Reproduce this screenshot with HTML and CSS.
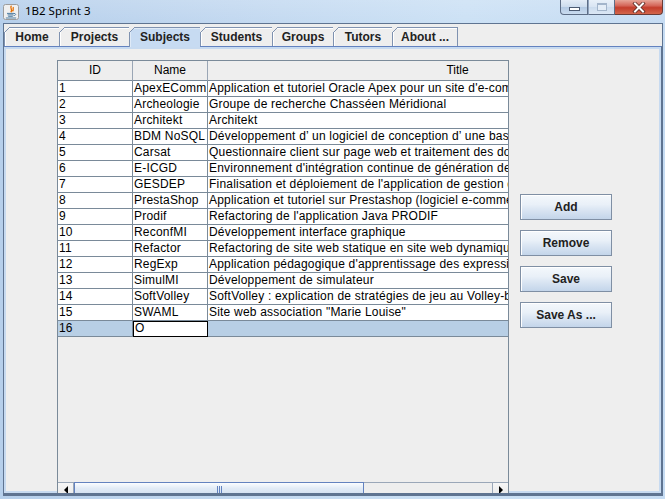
FILE: index.html
```html
<!DOCTYPE html>
<html>
<head>
<meta charset="utf-8">
<title>1B2 Sprint 3</title>
<link rel="stylesheet" href="styles.css">
</head>
<body>
<div class="window">
  <div class="titlebar">
    <svg class="app-icon" viewBox="0 0 16 16">
      <rect x="0.5" y="0.5" width="15" height="15" rx="2" fill="#f0f0f0" stroke="#9c9c9c"/>
      <path d="M8.5 1.8 C6 4 10.5 5.2 7.8 8.2 M10.6 3.2 C9.2 4.6 11.3 5.3 9.6 7.4" stroke="#e76f00" fill="none" stroke-width="1.3"/>
      <path d="M4 9.4 h7 M4.6 10.9 h5.8 M5.2 12.3 h4.6 M11 9.4 c2.2 0 2.2 2.2 -0.4 2.2" stroke="#4f7ea3" fill="none" stroke-width="1"/>
      <path d="M2.8 14 h10.4" stroke="#4f7ea3" stroke-width="1"/>
    </svg>
    <span class="title">1B2 Sprint 3</span>
    <div class="caption">
      <div class="cap cap-min"><span class="min-glyph"></span></div>
      <div class="cap cap-max"><span class="max-glyph"></span></div>
      <div class="cap cap-close">
        <svg class="close-glyph" viewBox="0 0 14 11">
          <path d="M3 1.5 L11 9.5 M11 1.5 L3 9.5" stroke="#5a2a24" stroke-width="3.6" stroke-linecap="square"/>
          <path d="M3 1.5 L11 9.5 M11 1.5 L3 9.5" stroke="#ffffff" stroke-width="2" stroke-linecap="square"/>
        </svg>
      </div>
    </div>
  </div>
  <div class="client">
    <div class="tabstrip">
      <div class="tab tab-home">Home</div>
      <div class="tab tab-projects">Projects</div>
      <div class="tab tab-subjects selected">Subjects</div>
      <div class="tab tab-students">Students</div>
      <div class="tab tab-groups">Groups</div>
      <div class="tab tab-tutors">Tutors</div>
      <div class="tab tab-about last">About ...</div>
    </div>
    <div class="tabcontent">
      <div class="scrollpane">
        <div class="viewport">
          <div class="grid">
            <div class="hcell">ID</div><div class="hcell">Name</div><div class="hcell">Title</div>
            <div class="cell">1</div><div class="cell">ApexEComm</div><div class="cell">Application et tutoriel Oracle Apex pour un site d'e-commerce</div>
            <div class="cell">2</div><div class="cell">Archeologie</div><div class="cell">Groupe de recherche Chasséen Méridional</div>
            <div class="cell">3</div><div class="cell">Architekt</div><div class="cell">Architekt</div>
            <div class="cell">4</div><div class="cell">BDM NoSQL</div><div class="cell">Développement d’ un logiciel de conception d’ une base de données NoSQL</div>
            <div class="cell">5</div><div class="cell">Carsat</div><div class="cell">Questionnaire client sur page web et traitement des données</div>
            <div class="cell">6</div><div class="cell">E-ICGD</div><div class="cell">Environnement d'intégration continue de génération de documents</div>
            <div class="cell">7</div><div class="cell">GESDEP</div><div class="cell">Finalisation et déploiement de l'application de gestion des dépenses</div>
            <div class="cell">8</div><div class="cell">PrestaShop</div><div class="cell">Application et tutoriel sur Prestashop (logiciel e-commerce)</div>
            <div class="cell">9</div><div class="cell">Prodif</div><div class="cell">Refactoring de l'application Java PRODIF</div>
            <div class="cell">10</div><div class="cell">ReconfMI</div><div class="cell">Développement interface graphique</div>
            <div class="cell">11</div><div class="cell">Refactor</div><div class="cell">Refactoring de site web statique en site web dynamique</div>
            <div class="cell">12</div><div class="cell">RegExp</div><div class="cell">Application pédagogique d'apprentissage des expressions régulières</div>
            <div class="cell">13</div><div class="cell">SimulMI</div><div class="cell">Développement de simulateur</div>
            <div class="cell">14</div><div class="cell">SoftVolley</div><div class="cell">SoftVolley : explication de stratégies de jeu au Volley-ball</div>
            <div class="cell">15</div><div class="cell">SWAML</div><div class="cell">Site web association "Marie Louise"</div>
            <div class="cell sel">16</div><div class="cell editing">O</div><div class="cell sel"></div>
          </div>
        </div>
        <div class="hscroll">
          <div class="arrow arrow-left"><span class="tri-left"></span></div>
          <div class="thumb"><span class="grip"></span><span class="grip"></span><span class="grip"></span></div>
          <div class="track"></div>
          <div class="arrow arrow-right"><span class="tri-right"></span></div>
        </div>
      </div>
      <div class="buttons">
        <div class="btn">Add</div>
        <div class="btn">Remove</div>
        <div class="btn">Save</div>
        <div class="btn">Save As ...</div>
      </div>
    </div>
  </div>
</div>
</body>
</html>
```

FILE: styles.css
```css
* { box-sizing: border-box; margin: 0; padding: 0; }
html, body { width: 665px; height: 499px; overflow: hidden; }
body {
  font-family: "Liberation Sans", Arial, sans-serif;
  font-size: 12px;
  color: #000;
  background: #bdd5ee;
}
.window {
  width: 665px;
  height: 499px;
  display: flex;
  flex-direction: column;
  background: linear-gradient(90deg, #b6cfeb 0%, #c2d8f0 35%, #cce1f5 70%, #c6dcf3 100%);
}
.titlebar {
  height: 23px;
  flex: none;
  display: flex;
  align-items: flex-start;
  background: linear-gradient(180deg, rgba(255,255,255,0.15), rgba(255,255,255,0));
}
.app-icon { width: 16px; height: 16px; margin: 4px 0 0 3px; flex: none; }
.title {
  font-family: "Noto Sans", "DejaVu Sans", sans-serif;
  font-size: 11.5px;
  line-height: 16px;
  margin: 3px 0 0 6px;
  color: #000;
}
.caption { display: flex; margin-left: auto; margin-right: 2px; height: 15px; }
.cap {
  height: 15px;
  border: 1px solid #5d6d86;
  border-top: none;
  display: flex;
  align-items: center;
  justify-content: center;
}
.cap-min {
  width: 28px;
  border-radius: 0 0 0 4px;
  background: linear-gradient(180deg, #e3ecf7 0%, #cddcee 48%, #b3c9e3 52%, #cadcf0 100%);
}
.cap-max {
  width: 27px;
  border-left: 1px solid #8fa2bd;
  background: linear-gradient(180deg, #e8f0f9 0%, #d9e5f3 48%, #ccdcee 52%, #dbe7f5 100%);
}
.cap-close {
  width: 48px;
  border-left: none;
  border-radius: 0 0 4px 0;
  background: linear-gradient(180deg, #e7a699 0%, #d5675a 40%, #c43d2c 55%, #d3664c 100%);
  border-color: #6b3b35;
}
.min-glyph {
  width: 11px;
  height: 4px;
  margin-top: 4px;
  background: #fff;
  border: 1px solid #4b5a72;
}
.max-glyph {
  width: 10px;
  height: 8px;
  border: 1px solid #a3b5cb;
  border-top-width: 2px;
  background: #e4edf7;
}
.close-glyph { width: 14px; height: 11px; }

.client {
  flex: 1;
  margin: 0 2px 3px 3px;
  border: 1px solid #5f7491;
  background: #eeeeee;
  display: flex;
  flex-direction: column;
  min-height: 0;
}
.tabstrip {
  height: 22px;
  flex: none;
  display: flex;
  align-items: flex-start;
  padding-top: 3px;
}
.tab {
  position: relative;
  height: 19px;
  border-top: 1px solid #7f92b0;
  border-left: 1px solid #7f92b0;
  background: #eeeeee;
  box-shadow: inset 1px 1px 0 #ffffff;
  font-weight: bold;
  font-size: 12px;
  color: #222;
  line-height: 19px;
  text-align: center;
  white-space: nowrap;
  flex: none;
}
.tab::before {
  content: "";
  position: absolute;
  top: -1px;
  left: -1px;
  width: 6px;
  height: 6px;
  background: linear-gradient(to bottom right, #eeeeee 0 calc(50% - 0.6px), #7f92b0 calc(50% - 0.6px) calc(50% + 0.6px), transparent calc(50% + 0.6px));
}
.tab.last { border-right: 1px solid #7f92b0; }
.tab.selected {
  height: 20px;
  z-index: 1;
  background: #c7dbf2;
  box-shadow: inset 1px 1px 0 #dfeaf7;
}
.tab-home { width: 55px; }
.tab-projects { width: 70px; }
.tab-subjects { width: 71px; }
.tab-students { width: 72px; }
.tab-groups { width: 61px; }
.tab-tutors { width: 59px; }
.tab-about { width: 66px; }

.tabcontent {
  flex: 1;
  min-height: 0;
  border-top: 1px solid #6382bf;
  border-right: 1px solid #5f7491;
  border-bottom: 2px solid #5f7491;
  box-shadow: inset 0 0 0 2px #c7daf0;
  background: #eeeeee;
  padding: 13px 0 0 53px;
  overflow: hidden;
  display: flex;
  align-items: flex-start;
}
.scrollpane {
  flex: none;
  width: 452px;
  height: 439px;
  border: 1px solid #7a8a99;
  background: #eeeeee;
  display: flex;
  flex-direction: column;
}
.viewport {
  height: 421px;
  flex: none;
  overflow: hidden;
  background: #eeeeee;
}
.grid {
  width: 650px;
  display: grid;
  grid-template-columns: 75px 75px 500px;
}
.hcell {
  height: 20px;
  border-right: 1px solid #9aa6b5;
  border-bottom: 1px solid #7a8a99;
  background: #eeeeee;
  text-align: center;
  line-height: 19px;
  white-space: nowrap;
  overflow: hidden;
}
.cell {
  height: 16px;
  border-right: 1px solid #7a8a99;
  border-bottom: 1px solid #7a8a99;
  background: #ffffff;
  padding-left: 1px;
  line-height: 15px;
  letter-spacing: 0.2px;
  white-space: nowrap;
  overflow: hidden;
}
.cell.sel { background: #b8cfe5; }
.cell.editing {
  background: #ffffff;
  outline: 1px solid #000;
  outline-offset: -1px;
  padding-left: 2px;
}

.hscroll {
  height: 17px;
  flex: none;
  display: flex;
}
.arrow {
  width: 16px;
  flex: none;
  border-top: 1px solid #9aa7b8;
  background: linear-gradient(180deg, #f6f6f6, #e6e6e6);
  display: flex;
  align-items: center;
  justify-content: center;
  padding-bottom: 3px;
}
.arrow-left { border-right: 1px solid #9aa7b8; }
.arrow-right { border-left: 1px solid #9aa7b8; }
.tri-left {
  width: 0; height: 0;
  border-top: 4px solid transparent;
  border-bottom: 4px solid transparent;
  border-right: 4px solid #000;
}
.tri-right {
  width: 0; height: 0;
  border-top: 4px solid transparent;
  border-bottom: 4px solid transparent;
  border-left: 4px solid #000;
}
.thumb {
  width: 290px;
  flex: none;
  border: 1px solid #6382bf;
  background: linear-gradient(180deg, #fbfdff 0%, #e2ebf6 35%, #c9daee 100%);
  display: flex;
  justify-content: center;
  align-items: flex-start;
  gap: 1px;
  padding-top: 3px;
}
.grip { width: 1px; height: 8px; background: #6382bf; }
.track {
  flex: 1;
  border-top: 1px solid #9aa7b8;
  background: #eeeeee;
}

.buttons {
  flex: none;
  margin: 134px 0 0 11px;
  display: flex;
  flex-direction: column;
  gap: 10px;
}
.btn {
  width: 92px;
  height: 26px;
  border: 1px solid #7f8fa4;
  background: linear-gradient(180deg, #f4f8fc 0%, #e9f0f8 40%, #dbe6f3 60%, #c3d5ea 100%);
  box-shadow: inset 1px 1px 0 #ffffff;
  font-weight: bold;
  font-size: 12px;
  color: #222;
  text-align: center;
  line-height: 24px;
}
```
